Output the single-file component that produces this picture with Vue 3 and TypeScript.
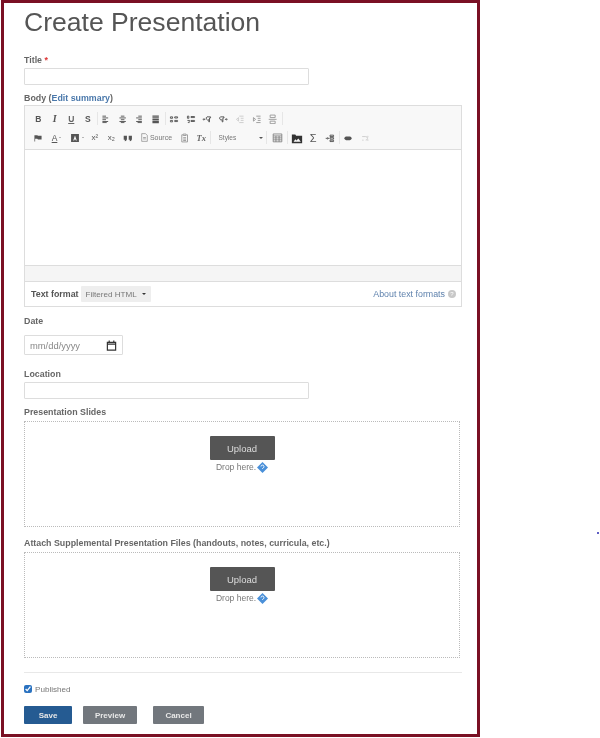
<script setup lang="ts">
interface Tool {
  kind: 'text' | 'icon' | 'sep' | 'source' | 'styles'
  w?: number
  label?: string
  cls?: string
  d?: string
  caret?: boolean
  off?: boolean
}

const lines = (...ys: [number, number, number][]) =>
  ys.map(([a, b, y]) => `M${a} ${y}H${b}`).join('')

const alignL = lines([2, 7, 3], [2, 10, 5.5], [2, 7, 8], [2, 10, 10.5], [2, 8, 12])
const alignC = lines([4, 9, 3], [2, 11, 5.5], [4, 9, 8], [2, 11, 10.5], [4, 9, 12])
const alignR = lines([6, 11, 3], [3, 11, 5.5], [6, 11, 8], [3, 11, 10.5], [5, 11, 12])
const alignJ = lines([2, 11, 3], [2, 11, 5.5], [2, 11, 8], [2, 11, 10.5], [2, 11, 12])

const row1: Tool[] = [
  { kind: 'text', label: 'B', cls: 'b' },
  { kind: 'text', label: 'I', cls: 'i' },
  { kind: 'text', label: 'U', cls: 'u' },
  { kind: 'text', label: 'S', cls: 's' },
  { kind: 'sep' },
  { kind: 'icon', d: alignL },
  { kind: 'icon', d: alignC },
  { kind: 'icon', d: alignR },
  { kind: 'icon', cls: 'heavy', d: alignJ },
  { kind: 'sep' },
  { kind: 'icon', d: 'M2 4h3v2H2zM8 4h4v1.600H8zM2 9h3v2H2zM8 9h4v1.600H8z' },
  { kind: 'icon', d: 'M2 3h2v3H2zM7 3.500h5V5H7zM2 9h3v1L3 12h2M7 9h5v1.500H7z' },
  { kind: 'icon', d: 'M1 7.500h3M4 7.500l-1.400-1.400M4 7.500 2.600 8.900M7 4h5v1.500H10.500V11H9.500V8A2 2 0 0 1 7 4z' },
  { kind: 'icon', d: 'M2 4h5v1.500H5.500V11H4.500V8A2 2 0 0 1 2 4zM9 7.500h3M9 7.500l1.400-1.400M9 7.500l1.400 1.400' },
  { kind: 'icon', off: true, d: 'M6 3h6M8 6h4M8 9h4M6 12h6M5 5 2 7.500 5 10z' },
  { kind: 'icon', cls: 'mid', d: 'M6 3h6M8 6h4M8 9h4M6 12h6M2 5l3 2.500L2 10z' },
  { kind: 'icon', cls: 'mid', d: 'M3 1.500h7V5H3zM1 7.500h11M3 10h7v3.500H3z' },
  { kind: 'sep' }
]

const row2: Tool[] = [
  { kind: 'icon', cls: 'fill', d: 'M2 3h4l1 1h5v5H7L6 8H3v4H2z' },
  { kind: 'text', label: 'A', cls: 'a', w: 20, caret: true },
  { kind: 'icon', cls: 'fill bgc', w: 20, caret: true, d: 'M1.500 1.500h11v11h-11zM7 3.500 4.500 10.500h1.300l.5-1.500h1.400l.5 1.500h1.300L7 3.500z' },
  { kind: 'text', label: 'x²', cls: 'sup' },
  { kind: 'text', label: 'x₂', cls: 'sup' },
  { kind: 'icon', cls: 'fill', w: 17, d: 'M1 4h4.500v4c0 2-1.200 3-3 3.500V9.500H1zM8 4h4.500v4c0 2-1.200 3-3 3.500V9.500H8z' },
  { kind: 'source', w: 40 },
  { kind: 'icon', cls: 'mid', d: 'M4 2.500H2.500v10h8v-10H9M4.500 1.500h4v2h-4zM4.500 6.500h4M4.500 8.500h4M4.500 10.500h4' },
  { kind: 'text', label: 'Tx', cls: 'tx' },
  { kind: 'sep' },
  { kind: 'styles' },
  { kind: 'sep' },
  { kind: 'icon', w: 19, cls: 'tbl', d: 'M1.500 2.500h11v10h-11zM1.500 5h11M1.500 7.500h11M1.500 10h11M5 5v7.500M9 5v7.500' },
  { kind: 'sep' },
  { kind: 'icon', cls: 'fill img', d: 'M1 3h4l1 1.500h7V13H1zM3 11.500h8.500L8.500 7.500 6.500 10 5 8.500z' },
  { kind: 'text', label: 'Σ', cls: 'sigma' },
  { kind: 'icon', d: 'M1 7.500h4M5 7.500l-1.500-1.500M5 7.500 3.500 9M7 3h5v2H7zM7 6.500h5v2H7zM7 10h5v2H7z' },
  { kind: 'sep' },
  { kind: 'icon', cls: 'fill', d: 'M4.500 5h5a2.500 2.500 0 0 1 0 5h-5a2.500 2.500 0 0 1 0-5z' },
  { kind: 'icon', off: true, d: 'M3 5h5a2.500 2.500 0 0 1 0 5M11 4v2M11 9v2M3 10h2' }
]

const dropzones = [
  { label: 'Presentation Slides', cls: 'first' },
  { label: 'Attach Supplemental Presentation Files (handouts, notes, curricula, etc.)', cls: 'second' }
]
</script>

<template>
  <div class="page">
    <main class="frame">
      <h1 class="heading">Create Presentation</h1>

      <label class="label title-label">Title <span class="req">*</span></label>
      <div class="input"></div>

      <label class="label body-label">Body (<a class="edit">Edit summary</a>)</label>
      <section class="editor">
        <div class="toolbar">
          <div v-for="(row, r) in [row1, row2]" :key="r" class="tool-row">
            <template v-for="(t, i) in row" :key="i">
              <span v-if="t.kind === 'sep'" class="sep"></span>
              <span v-else-if="t.kind === 'styles'" class="styles">
                <span>Styles</span><i class="caret"></i>
              </span>
              <span v-else-if="t.kind === 'source'" class="tool source" :style="{ width: t.w + 'px' }">
                <svg width="10" height="12" viewBox="0 0 10 12" fill="none" stroke="#888" stroke-width="1">
                  <path d="M1 .5h5.500L9 3v8.500H1zM3 6h4M3 8h4" />
                </svg>
                <span>Source</span>
              </span>
              <span v-else class="tool" :class="[t.cls, { off: t.off }]" :style="t.w ? { width: t.w + 'px' } : undefined">
                <template v-if="t.kind === 'text'">{{ t.label }}</template>
                <svg v-else width="14" height="14" viewBox="0 0 14 14" fill="none" stroke="currentColor" stroke-width="1.300">
                  <path :d="t.d" />
                </svg>
                <i v-if="t.caret" class="caret small"></i>
              </span>
            </template>
          </div>
        </div>
        <div class="content"></div>
        <div class="pathbar"></div>
        <div class="format">
          <span class="format-label">Text format</span>
          <span class="select">Filtered HTML<i class="caret dark"></i></span>
          <a class="about">About text formats</a>
          <span class="help">?</span>
        </div>
      </section>

      <label class="label date-label">Date</label>
      <div class="date">
        <span>mm/dd/yyyy</span>
        <svg width="12" height="12" viewBox="0 0 12 12" fill="none" stroke="#333" stroke-width="1.300">
          <path d="M1.500 2.500h9v8.500h-9zM1.500 4.500h9M3.500 .5v2M8.500 .5v2" />
        </svg>
      </div>

      <label class="label location-label">Location</label>
      <div class="input"></div>

      <template v-for="z in dropzones" :key="z.label">
        <label class="label" :class="z.cls">{{ z.label }}</label>
        <div class="dropzone">
          <button class="upload" type="button">Upload</button>
          <div class="drop-text">
            Drop here.
            <svg width="11" height="11" viewBox="0 0 11 11">
              <path d="M5.500 0 11 5.500 5.500 11 0 5.500z" fill="#4a90d9" />
              <path d="M4 4.500a1.500 1.500 0 1 1 2 1.500l-.5.500V7" stroke="#fff" fill="none" stroke-width=".9" />
            </svg>
          </div>
        </div>
      </template>

      <hr class="rule" />

      <label class="published">
        <input type="checkbox" checked />
        <span>Published</span>
      </label>

      <div class="actions">
        <button class="btn save" type="button">Save</button>
        <button class="btn preview" type="button">Preview</button>
        <button class="btn cancel" type="button">Cancel</button>
      </div>
    </main>
    <span class="dot"></span>
  </div>
</template>

<style>
html, body { background: #fff; }
</style>

<style scoped>
.page {
  position: relative;
  width: 600px;
  height: 738px;
  overflow: hidden;
  background: #fff;
  font-family: "Liberation Sans", Arial, sans-serif;
  filter: blur(0.6px);
}
.frame {
  box-sizing: border-box;
  width: 479px;
  height: 737px;
  margin-left: 1px;
  border: 3px solid #7a1024;
  padding: 0 0 0 20px;
  color: #666;
}
.heading {
  margin: 0;
  height: 40px;
  padding-top: 2px;
  box-sizing: border-box;
  font-size: 26.550px;
  line-height: 34px;
  font-weight: 400;
  color: #555;
}
.label {
  display: block;
  font-size: 8.850px;
  line-height: 12px;
  font-weight: 700;
  color: #666;
}
.title-label { margin-top: 11px; }
.body-label { margin-top: 7px; }
.date-label { margin-top: 8px; }
.location-label { margin-top: 13px; }
.first { margin-top: 7px; }
.second { margin-top: 10px; }
.req { color: #d33; }
.edit { color: #4a78ab; }
.input {
  box-sizing: border-box;
  width: 285px;
  height: 17px;
  margin-top: 2px;
  border: 1px solid #ddd;
  border-radius: 1px;
}
.editor {
  box-sizing: border-box;
  width: 438px;
  margin-top: 1px;
  border: 1px solid #ddd;
}
.toolbar {
  box-sizing: border-box;
  height: 44px;
  padding: 3px 0 0 5px;
  background: #f8f8f8;
  border-bottom: 1px solid #ddd;
}
.tool-row {
  display: flex;
  align-items: center;
  height: 19px;
}
.tool {
  box-sizing: border-box;
  display: flex;
  flex: none;
  align-items: center;
  justify-content: center;
  gap: 2px;
  width: 16.500px;
  height: 16px;
  font-size: 8.500px;
  font-weight: 700;
  color: #555;
}
.tool svg { flex: none; width: 10px; height: 10px; }
.tool.off { color: #ccc; }
.tool.mid { color: #999; }
.i { font-style: italic; font-family: "Liberation Serif", serif; font-size: 10px; }
.u { text-decoration: underline; color: #666; }
.a { text-decoration: underline; font-weight: 400; }
.sup { font-size: 8px; font-weight: 400; }
.tx { font-family: "Liberation Serif", serif; font-style: italic; font-size: 8.500px; color: #666; }
.sigma { font-size: 11px; font-weight: 400; }
.fill svg { fill: currentColor; stroke: none; fill-rule: evenodd; }
.heavy svg { stroke-width: 1.800; }
.bgc svg { width: 10px; height: 10px; }
.img { color: #333; }
.img svg { width: 12px; height: 12px; }
.tbl svg { width: 11px; height: 11px; stroke-width: 1; color: #777; }
.sep {
  flex: none;
  width: 1px;
  height: 13px;
  margin: 0 .5px;
  background: #e6e6e6;
}
.source {
  gap: 2px;
  font-size: 7px;
  font-weight: 400;
  color: #777;
}
.source svg { width: 7px; height: 9px; }
.styles {
  box-sizing: border-box;
  display: flex;
  flex: none;
  align-items: center;
  justify-content: space-between;
  width: 54px;
  padding: 0 3px 0 7px;
  font-size: 6.500px;
  color: #777;
}
.caret {
  display: inline-block;
  width: 0;
  height: 0;
  border: 2px solid transparent;
  border-top: 2.500px solid #555;
  border-bottom: 0;
}
.caret.small { border-width: 1.500px 1.500px 0; border-top-color: #777; }
.caret.dark { border-top-color: #333; }
.content {
  height: 115px;
  background: #fff;
}
.pathbar {
  box-sizing: border-box;
  height: 17px;
  background: #f5f5f5;
  border-top: 1px solid #ddd;
  border-bottom: 1px solid #ddd;
}
.format {
  display: flex;
  align-items: center;
  height: 24px;
  padding: 0 5px 0 6px;
}
.format-label { font-size: 8.850px; font-weight: 700; color: #555; white-space: nowrap; }
.select {
  box-sizing: border-box;
  display: flex;
  flex: none;
  align-items: center;
  justify-content: space-between;
  width: 70px;
  height: 16px;
  margin-left: 2px;
  padding: 0 5px;
  background: #eee;
  border-radius: 1px;
  font-size: 8.100px;
  color: #777;
  white-space: nowrap;
}
.about {
  margin-left: auto;
  font-size: 8.850px;
  color: #5f82ad;
}
.help {
  display: flex;
  align-items: center;
  justify-content: center;
  width: 8px;
  height: 8px;
  margin-left: 3px;
  border-radius: 50%;
  background: #c8c8c8;
  color: #fff;
  font-size: 6px;
}
.date {
  box-sizing: border-box;
  display: flex;
  align-items: center;
  justify-content: space-between;
  width: 99px;
  height: 20px;
  margin-top: 8px;
  padding: 0 5px;
  border: 1px solid #ddd;
  border-radius: 1px;
  font-size: 9.400px;
  color: #888;
}
.date svg { width: 11px; height: 11px; }
.dropzone {
  box-sizing: border-box;
  display: flex;
  flex-direction: column;
  align-items: center;
  width: 436px;
  height: 106px;
  margin-top: 3px;
  padding-top: 14px;
  border: 1px dotted #bbb;
}
.upload {
  box-sizing: border-box;
  width: 65px;
  height: 24px;
  padding: 0;
  border: 0;
  border-radius: 1px;
  background: #555;
  color: #ddd;
  font-family: inherit;
  font-size: 9.500px;
}
.drop-text {
  display: flex;
  align-items: center;
  gap: 1px;
  height: 14px;
  font-size: 8.500px;
  color: #777;
}
.rule {
  width: 438px;
  margin: 14px 0 0;
  border: 0;
  border-top: 1px solid #e8e8e8;
}
.published {
  display: flex;
  align-items: center;
  gap: 3px;
  height: 12px;
  margin-top: 10px;
  font-size: 8.100px;
  color: #777;
}
.published input {
  width: 8px;
  height: 8px;
  margin: 0;
  accent-color: #2a72c0;
}
.actions {
  display: flex;
  margin-top: 11px;
}
.btn {
  box-sizing: border-box;
  height: 18px;
  padding: 0;
  border: 0;
  border-radius: 1px;
  color: #e8e8e8;
  font-family: inherit;
  font-size: 8px;
  font-weight: 700;
}
.save { width: 48px; background: #255b92; }
.preview { width: 54px; margin-left: 11px; background: #72777d; }
.cancel { width: 51px; margin-left: 16px; background: #72777d; }
.dot {
  position: absolute;
  left: 597px;
  top: 532px;
  width: 2px;
  height: 2px;
  border-radius: 50%;
  background: #2a2ab0;
}
</style>
